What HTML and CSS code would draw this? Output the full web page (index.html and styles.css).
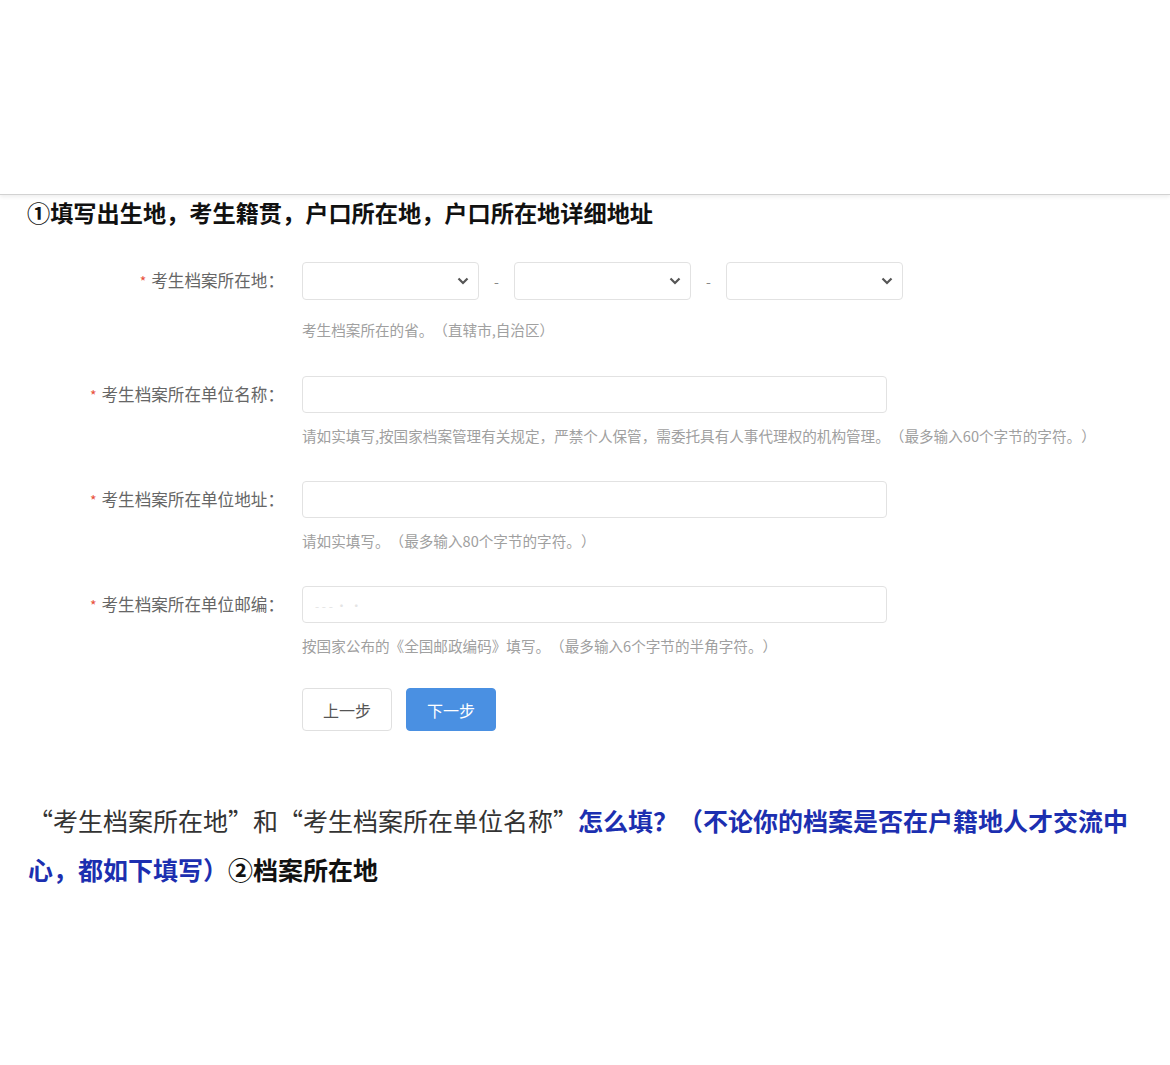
FILE: index.html
```html
<!DOCTYPE html>
<html lang="zh-CN">
<head>
    <meta charset="UTF-8">
    <meta name="viewport" content="width=device-width, initial-scale=1.0">
    <title>考生档案所在地</title>
    <link rel="stylesheet" href="styles.css">
</head>
<body>
    <div class="top-blank"></div>

    <h2 class="step-title">①填写出生地，考生籍贯，户口所在地，户口所在地详细地址</h2>

    <div class="form">
        <div class="field">
            <label class="field-label"><span class="req">*</span>考生档案所在地：</label>
            <div class="selects">
                <div class="select"><svg width="12" height="8" viewBox="0 0 12 8"><path d="M1.5 1.5 L6 6 L10.5 1.5" fill="none" stroke="#555" stroke-width="2.2"/></svg></div>
                <span class="dash">-</span>
                <div class="select"><svg width="12" height="8" viewBox="0 0 12 8"><path d="M1.5 1.5 L6 6 L10.5 1.5" fill="none" stroke="#555" stroke-width="2.2"/></svg></div>
                <span class="dash">-</span>
                <div class="select"><svg width="12" height="8" viewBox="0 0 12 8"><path d="M1.5 1.5 L6 6 L10.5 1.5" fill="none" stroke="#555" stroke-width="2.2"/></svg></div>
            </div>
            <div class="help help-first">考生档案所在的省。（直辖市,自治区）</div>
        </div>

        <div class="field">
            <label class="field-label"><span class="req">*</span>考生档案所在单位名称：</label>
            <div class="input"></div>
            <div class="help">请如实填写,按国家档案管理有关规定，严禁个人保管，需委托具有人事代理权的机构管理。（最多输入60个字节的字符。）</div>
        </div>

        <div class="field">
            <label class="field-label"><span class="req">*</span>考生档案所在单位地址：</label>
            <div class="input"></div>
            <div class="help">请如实填写。（最多输入80个字节的字符。）</div>
        </div>

        <div class="field">
            <label class="field-label"><span class="req">*</span>考生档案所在单位邮编：</label>
            <div class="input"><span class="ghost">- - - · ·</span></div>
            <div class="help">按国家公布的《全国邮政编码》填写。（最多输入6个字节的半角字符。）</div>
        </div>

        <div class="buttons">
            <button class="btn btn-prev">上一步</button>
            <button class="btn btn-next">下一步</button>
        </div>
    </div>

    <p class="note">“考生档案所在地”和“考生档案所在单位名称”<span class="blue">怎么填？（不论你的档案是否在户籍地人才交流中心，都如下填写）</span><b>②档案所在地</b></p>
</body>
</html>
```

FILE: styles.css
```css
body {
    margin: 0;
    padding: 0;
    background-color: #fff;
    font-family: "Noto Sans CJK SC", "Noto Sans", sans-serif;
    color: #333;
    text-spacing-trim: space-all;
}
.top-blank {
    height: 194px;
    border-bottom: 1px solid #d2d2d2;
    box-shadow: 0 2px 4px rgba(0, 0, 0, 0.07);
}
.step-title {
    margin: 0;
    padding-left: 27px;
    font-size: 23.2px;
    line-height: 34px;
    font-weight: 700;
    color: #111;
}
.form {
    margin-top: 33px;
}
.field {
    display: grid;
    grid-template-columns: 284px auto;
    column-gap: 18px;
    justify-content: start;
    margin-bottom: 35px;
}
.field:first-child {
    margin-bottom: 36px;
}
.field-label {
    text-align: right;
    font-size: 16.6px;
    line-height: 37px;
    color: #666;
}
.req {
    color: #e8503a;
    font-size: 14px;
    margin-right: 5px;
}
.selects {
    display: flex;
    align-items: center;
}
.select {
    width: 177px;
    height: 38px;
    box-sizing: border-box;
    border: 1px solid #e2e2e2;
    border-radius: 4px;
    display: flex;
    align-items: center;
    justify-content: flex-end;
    padding-right: 9px;
}
.dash {
    width: 35px;
    text-align: center;
    color: #888;
    font-size: 14px;
}
.input {
    width: 585px;
    height: 37px;
    box-sizing: border-box;
    border: 1px solid #e2e2e2;
    border-radius: 4px;
    padding-left: 12px;
    line-height: 35px;
}
.ghost {
    color: #e4e4e4;
    font-size: 12px;
}
.help {
    grid-column: 2;
    margin-top: 12px;
    font-size: 14.6px;
    line-height: 20px;
    color: #a0a0a0;
    white-space: nowrap;
}
.help-first {
    margin-top: 20px;
}
.buttons {
    display: flex;
    gap: 14px;
    padding-left: 302px;
    margin-top: -3px;
}
.btn {
    width: 90px;
    height: 43px;
    border-radius: 4px;
    font-family: "Noto Sans CJK SC", sans-serif;
    font-size: 16px;
    cursor: pointer;
}
.btn-prev {
    background-color: #fff;
    border: 1px solid #e0e0e0;
    color: #555;
}
.btn-next {
    background-color: #4a90e2;
    border: 1px solid #4a90e2;
    color: #fff;
}
.note {
    margin: 65px 0 0;
    padding-left: 28px;
    width: 1112px;
    font-size: 25px;
    line-height: 49px;
    color: #333;
}
.note .blue {
    color: #1c2fb0;
    font-weight: 700;
}
.note b {
    color: #111;
    font-weight: 700;
}
```
